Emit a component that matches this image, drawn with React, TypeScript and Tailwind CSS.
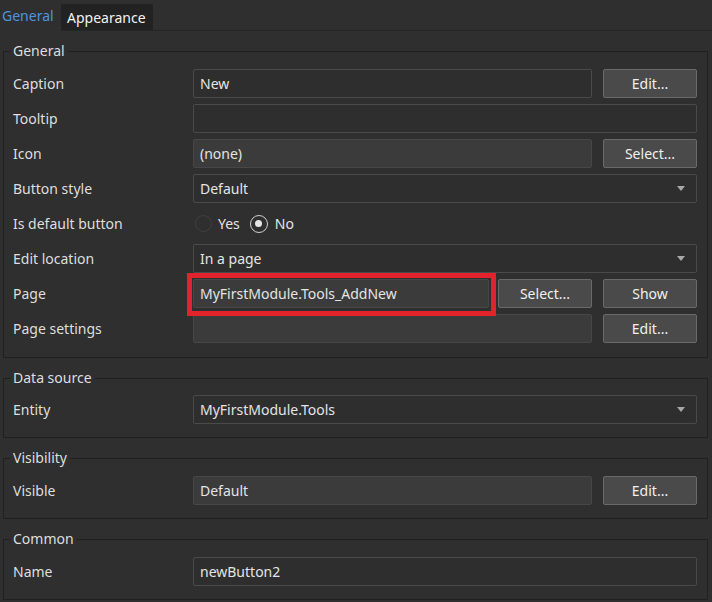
import React from "react";

const font = { fontFamily: '"Noto Sans", "Open Sans", sans-serif' };

function Label({ children }: { children: React.ReactNode }) {
  return <div className="w-[180px] shrink-0 text-[14px] leading-[20px] text-[#dedede]">{children}</div>;
}

function Input({ value, readOnly, className = "" }: { value?: string; readOnly?: boolean; className?: string }) {
  return (
    <div
      className={`h-[29px] flex items-center px-[6px] rounded-[2px] border text-[14px] text-[#e4e4e4] ${
        readOnly ? "bg-[#3b3b3b] border-[#474747]" : "bg-[#2e2e2e] border-[#4a4a4a]"
      } ${className}`}
    >
      {value}
    </div>
  );
}

function Btn({ children }: { children: React.ReactNode }) {
  return (
    <div className="h-[29px] w-[94px] shrink-0 flex items-center justify-center rounded-[2px] border border-[#6a6a6a] bg-[#4a4a4a] text-[14px] text-[#f0f0f0]">
      {children}
    </div>
  );
}

function Select({ value }: { value: string }) {
  return (
    <div className="h-[29px] flex-1 flex items-center justify-between pl-[6px] pr-[11px] rounded-[2px] border border-[#4a4a4a] bg-[#2e2e2e] text-[14px] text-[#e4e4e4]">
      <span>{value}</span>
      <svg width="8" height="5" viewBox="0 0 8 5">
        <path d="M0 0 H8 L4 5 Z" fill="#a8a8a8" />
      </svg>
    </div>
  );
}

function Row({ label, children }: { label: string; children: React.ReactNode }) {
  return (
    <div className="flex items-center h-[29px]">
      <Label>{label}</Label>
      <div className="flex-1 flex items-center gap-[11px] h-full">{children}</div>
    </div>
  );
}

function Group({ title, children, pad }: { title: string; children: React.ReactNode; pad: string }) {
  return (
    <fieldset className={`border border-[#202020] ml-[3px] mr-[4px] pl-[9px] pr-[10px] min-w-0 ${pad}`}>
      <legend className="-ml-[3px] px-[3px] text-[14px] leading-[20px] text-[#dedede]">{title}</legend>
      <div className="flex flex-col gap-[6px]">{children}</div>
    </fieldset>
  );
}

export default function App() {
  return (
    <div className="w-[712px] h-[602px] bg-[#2f2f2f] overflow-hidden" style={font}>
      <div className="h-[31px] flex items-end">
        <div className="h-[31px] w-[61px] flex items-center pl-[2px] text-[14px] text-[#4f94dc]">General</div>
        <div className="h-[27px] w-[92px] flex items-center pl-[6px] bg-[#222222] text-[14px] text-[#f2f2f2] border-b border-[#262626]">Appearance</div>
        <div className="flex-1 h-[1px] bg-[#262626]" />
      </div>
      <div className="pt-[10px] flex flex-col gap-[10px]">
        <Group title="General" pad="pt-[8px] pb-[14px]">
          <Row label="Caption">
            <Input value="New" className="flex-1" />
            <Btn>Edit...</Btn>
          </Row>
          <Row label="Tooltip">
            <Input className="flex-1" />
          </Row>
          <Row label="Icon">
            <Input value="(none)" readOnly className="flex-1" />
            <Btn>Select...</Btn>
          </Row>
          <Row label="Button style">
            <Select value="Default" />
          </Row>
          <Row label="Is default button">
            <div className="flex items-center text-[14px] text-[#e4e4e4] pl-[2px]">
              <span className="w-[17px] h-[17px] rounded-full border border-[#404040]" />
              <span className="ml-[6px]">Yes</span>
              <span className="ml-[10px] w-[18px] h-[18px] rounded-full border-[1.5px] border-[#d0d0d0] flex items-center justify-center">
                <span className="w-[7px] h-[7px] rounded-full bg-[#e6e6e6]" />
              </span>
              <span className="ml-[7px]">No</span>
            </div>
          </Row>
          <Row label="Edit location">
            <Select value="In a page" />
          </Row>
          <Row label="Page">
            <div className="relative flex-1 h-full">
              <Input value="MyFirstModule.Tools_AddNew" readOnly className="w-full" />
              <div className="absolute left-[-6px] top-[-6px] w-[309px] h-[43px] border-[5px] border-[#e3232b]" />
            </div>
            <div className="-ml-[2px]">
              <Btn>Select...</Btn>
            </div>
            <Btn>Show</Btn>
          </Row>
          <Row label="Page settings">
            <Input readOnly className="flex-1" />
            <Btn>Edit...</Btn>
          </Row>
        </Group>
        <Group title="Data source" pad="pt-[7px] pb-[13px]">
          <Row label="Entity">
            <Select value="MyFirstModule.Tools" />
          </Row>
        </Group>
        <Group title="Visibility" pad="pt-[8px] pb-[13px]">
          <Row label="Visible">
            <Input value="Default" readOnly className="flex-1" />
            <Btn>Edit...</Btn>
          </Row>
        </Group>
        <Group title="Common" pad="pt-[8px] pb-[13px]">
          <Row label="Name">
            <Input value="newButton2" className="flex-1" />
          </Row>
        </Group>
      </div>
    </div>
  );
}
